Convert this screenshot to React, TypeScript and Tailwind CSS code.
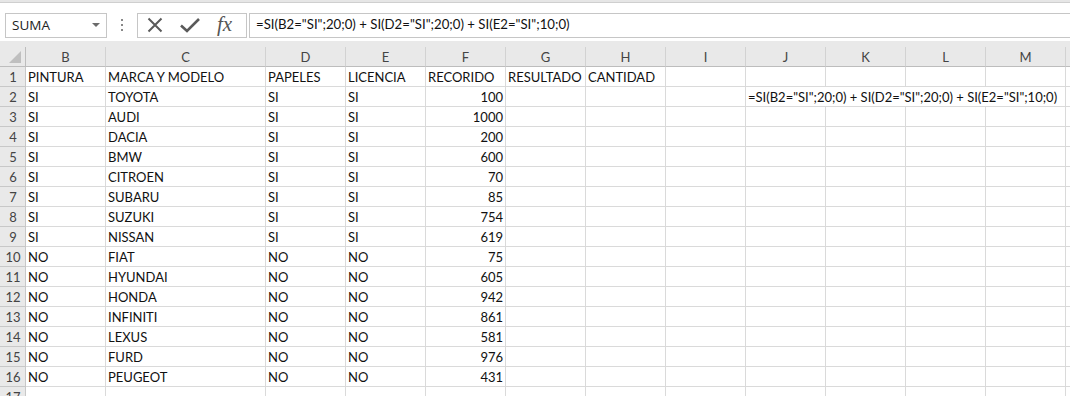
import React from "react";

const cols = ["B", "C", "D", "E", "F", "G", "H", "I", "J", "K", "L", "M", "N"];

const FORMULA = '=SI(B2="SI";20;0) + SI(D2="SI";20;0) + SI(E2="SI";10;0)';

const cars: [string, string, string, string, number][] = [
  ["SI", "TOYOTA", "SI", "SI", 100],
  ["SI", "AUDI", "SI", "SI", 1000],
  ["SI", "DACIA", "SI", "SI", 200],
  ["SI", "BMW", "SI", "SI", 600],
  ["SI", "CITROEN", "SI", "SI", 70],
  ["SI", "SUBARU", "SI", "SI", 85],
  ["SI", "SUZUKI", "SI", "SI", 754],
  ["SI", "NISSAN", "SI", "SI", 619],
  ["NO", "FIAT", "NO", "NO", 75],
  ["NO", "HYUNDAI", "NO", "NO", 605],
  ["NO", "HONDA", "NO", "NO", 942],
  ["NO", "INFINITI", "NO", "NO", 861],
  ["NO", "LEXUS", "NO", "NO", 581],
  ["NO", "FURD", "NO", "NO", 976],
  ["NO", "PEUGEOT", "NO", "NO", 431],
];

function Toolbar() {
  return (
    <div className="flex items-center h-[38px] bg-white pl-[5px] pt-[6px]">
      <div className="relative w-[102px] h-[25px] border border-[#c6c6c6] bg-white flex items-center pl-[6px] text-[13.5px] text-[#222] font-['Open_Sans',sans-serif]">
        SUMA
        <div className="absolute right-[6px] top-[9px] w-0 h-0 border-l-[4px] border-r-[4px] border-t-[4px] border-l-transparent border-r-transparent border-t-[#6b6b6b]" />
      </div>
      <div className="w-[30px] flex flex-col items-center gap-[3px]">
        <div className="w-[2px] h-[2px] bg-[#888]" />
        <div className="w-[2px] h-[2px] bg-[#888]" />
        <div className="w-[2px] h-[2px] bg-[#888]" />
      </div>
      <div className="w-[110px] h-[25px] border border-[#c6c6c6] flex items-center pl-[9px] gap-[17px]">
        <svg width="16" height="16" viewBox="0 0 16 16">
          <path d="M1.5 1.5 L14.5 14.5 M14.5 1.5 L1.5 14.5" stroke="#5a5a5a" strokeWidth="2" fill="none" />
        </svg>
        <svg width="20" height="16" viewBox="0 0 20 16">
          <path d="M1 8.5 L7 14 L19 2" stroke="#5a5a5a" strokeWidth="2.6" fill="none" strokeLinejoin="miter" />
        </svg>
        <span className="italic font-['Liberation_Serif',serif] text-[21px] text-[#555] leading-none -mt-[2px]">fx</span>
      </div>
      <div className="ml-[2px] flex-1 h-[25px] border border-r-0 border-[#c6c6c6] flex items-center pl-[6px] text-[13.2px] text-[#111] whitespace-nowrap">
        {FORMULA}
      </div>
    </div>
  );
}

function Cell({
  children,
  right,
  noBorderR,
  overflow,
}: {
  children?: React.ReactNode;
  right?: boolean;
  noBorderR?: boolean;
  overflow?: boolean;
}) {
  return (
    <div
      className={
        "h-[20px] border-b border-[#dadada] flex items-center pt-[3px] px-[2px] text-[13px] text-[#111] whitespace-nowrap " +
        (noBorderR ? "" : "border-r ") +
        (right ? "justify-end " : "") +
        (overflow ? "overflow-visible relative z-10 text-[13.2px]" : "overflow-hidden")
      }
    >
      {children}
    </div>
  );
}

function RowHead({ n }: { n: number }) {
  return (
    <div className="h-[20px] bg-[#e9e9e9] border-b border-r border-[#c8c8c8] flex items-center justify-center pt-[3px] pl-[1px] text-[13px] text-[#444]">
      {n}
    </div>
  );
}

export default function App() {
  const rows: (string | number)[][] = [
    ["PINTURA", "MARCA Y MODELO", "PAPELES", "LICENCIA", "RECORIDO", "RESULTADO", "CANTIDAD"],
    ...cars,
  ];

  return (
    <div className="w-[1070px] h-[396px] overflow-hidden bg-white font-['Lato',sans-serif]">
      <div className="h-[3px] bg-[#e6e6e6] border-b border-[#cfcfcf]" />
      <Toolbar />
      <div className="h-[6px] bg-[#e9e9e9]" />
      <div className="grid grid-cols-[26px_80px_160px_80px_80px_80px_80px_80px_80px_80px_80px_80px_80px_80px] w-[1146px]">
        <div className="relative h-[20px] bg-[#e9e9e9] border-b border-r border-[#bdbdbd]">
          <svg className="absolute right-[4px] bottom-[3px]" width="12" height="12" viewBox="0 0 12 12">
            <path d="M12 0 L12 12 L0 12 Z" fill="#bfbfbf" />
          </svg>
        </div>
        {cols.map((c) => (
          <div
            key={c}
            className="h-[20px] bg-[#e9e9e9] border-b border-r border-b-[#bdbdbd] border-r-[#d2d2d2] flex items-center justify-center pt-[2px] text-[13px] text-[#444]"
          >
            {c}
          </div>
        ))}
        {rows.map((r, i) => {
          const n = i + 1;
          return (
            <React.Fragment key={n}>
              <RowHead n={n} />
              {cols.map((c, j) => {
                const v = r[j];
                if (n === 2 && c === "J")
                  return (
                    <Cell key={c} noBorderR overflow>
                      {FORMULA}
                    </Cell>
                  );
                if (n === 2 && (c === "K" || c === "L"))
                  return <Cell key={c} noBorderR />;
                return (
                  <Cell key={c} right={typeof v === "number"}>
                    {v}
                  </Cell>
                );
              })}
            </React.Fragment>
          );
        })}
        <RowHead n={17} />
        {cols.map((c) => (
          <Cell key={c} />
        ))}
      </div>
    </div>
  );
}
